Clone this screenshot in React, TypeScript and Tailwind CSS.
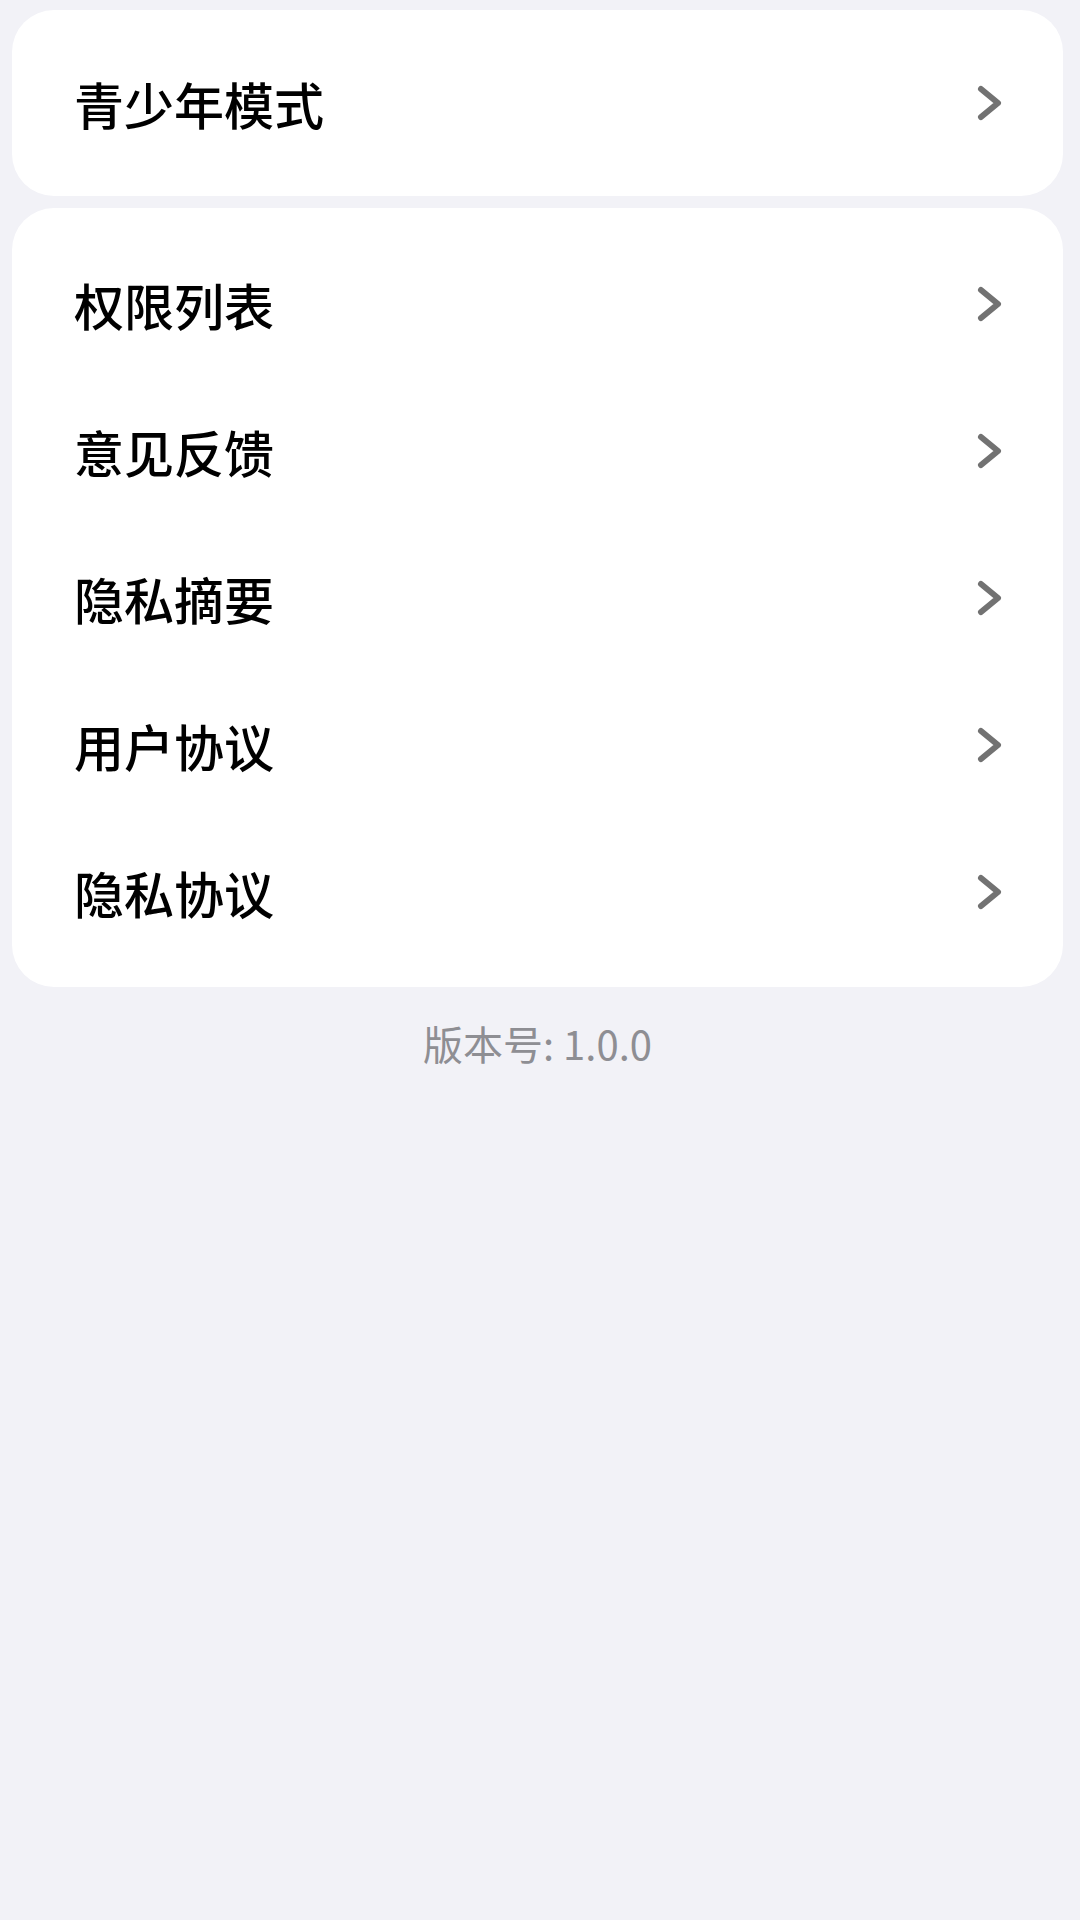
const font = { fontFamily: '"Noto Sans CJK SC", "Noto Sans", sans-serif' }

function Chevron() {
  return (
    <svg width="30" height="40" viewBox="0 0 30 40" fill="none" className="shrink-0">
      <polyline
        points="6,6 23,20 6,34"
        stroke="#727272"
        strokeWidth="6"
        strokeLinecap="round"
        strokeLinejoin="round"
      />
    </svg>
  )
}

function Row({ label }: { label: string }) {
  return (
    <div className="h-[147px] flex items-center justify-between pl-[62px] pr-[58px]">
      <span className="text-[50px] leading-none font-medium text-black">{label}</span>
      <Chevron />
    </div>
  )
}

const items = ['权限列表', '意见反馈', '隐私摘要', '用户协议', '隐私协议']

export default function App() {
  return (
    <div className="min-h-screen bg-[#f2f2f7] pl-[12px] pr-[17px] pt-[10px]" style={font}>
      {/* 青少年模式 */}
      <div className="h-[186px] bg-white rounded-[42px] flex items-center justify-between pl-[62px] pr-[58px]">
        <span className="text-[50px] leading-none font-medium text-black">青少年模式</span>
        <Chevron />
      </div>

      {/* list */}
      <div className="mt-[12px] bg-white rounded-[42px] py-[22px]">
        {items.map((label) => (
          <Row key={label} label={label} />
        ))}
      </div>

      <p className="mt-[26px] text-center text-[40px] leading-[60px] text-[#8e8e93]">版本号: 1.0.0</p>
    </div>
  )
}
